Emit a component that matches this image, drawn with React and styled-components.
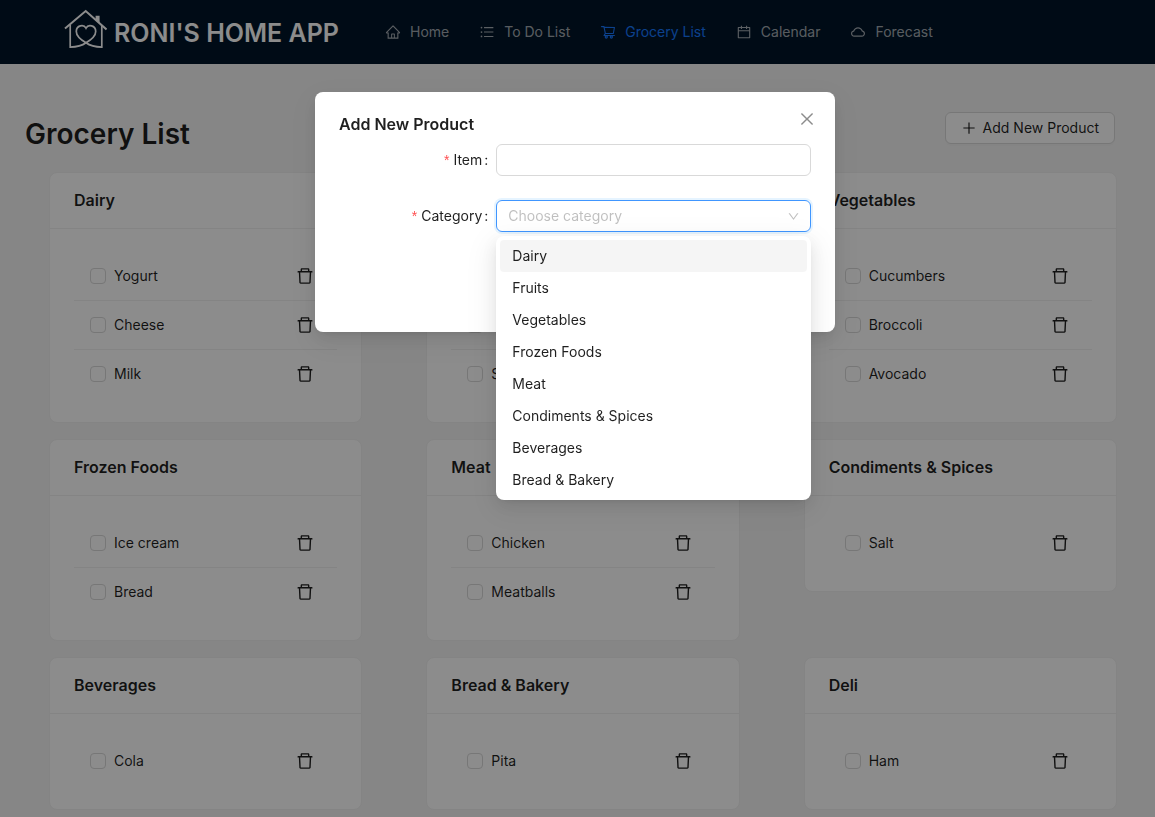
import React, { useState } from "react";
import styled, { createGlobalStyle } from "styled-components";
import {
  AiOutlineHome,
  AiOutlineUnorderedList,
  AiOutlineShoppingCart,
  AiOutlineCalendar,
  AiOutlineCloud,
  AiOutlineClose,
  AiOutlinePlus,
  AiOutlineDown,
  AiOutlineDelete,
} from "react-icons/ai";

const GlobalStyle = createGlobalStyle`
  *, *::before, *::after { box-sizing: border-box; }
  body {
    margin: 0;
    background: #f5f5f5;
    color: rgba(0, 0, 0, 0.88);
    font-family: Inter, Roboto, "Liberation Sans", sans-serif;
    font-size: 14px;
    line-height: 22px;
  }
  button, input, select { font: inherit; color: inherit; }
  ul { list-style: none; margin: 0; padding: 0; }
`;

const Page = styled.div`
  min-height: 100vh;
`;

const Header = styled.header`
  display: flex;
  align-items: center;
  height: 64px;
  padding-left: 64px;
  background: #001529;
`;

const Brand = styled.a`
  display: flex;
  align-items: center;
  gap: 7px;
  flex: 0 0 306px;
  padding-top: 2px;
  color: #fff;
  font-size: 25px;
  font-weight: 600;
  line-height: 40px;
  text-decoration: none;
  white-space: nowrap;
`;

const Nav = styled.nav`
  display: flex;
`;

const NavLink = styled.a`
  display: flex;
  align-items: center;
  gap: 9px;
  padding: 0 15px;
  line-height: 64px;
  color: ${(p) => (p.$active ? "#1677ff" : "rgba(255, 255, 255, 0.65)")};
  text-decoration: none;
  white-space: nowrap;
`;

const TitleBar = styled.div`
  display: flex;
  align-items: flex-start;
  justify-content: space-between;
  padding: 48px 40px 16px 25px;
`;

const PageTitle = styled.h1`
  margin: 0;
  font-size: 28px;
  font-weight: 600;
  line-height: 44px;
`;

const AddButton = styled.button`
  display: flex;
  align-items: center;
  gap: 6px;
  height: 32px;
  padding: 0 15px;
  border: 1px solid #d9d9d9;
  border-radius: 6px;
  background: #fff;
  box-shadow: 0 2px 0 rgba(0, 0, 0, 0.02);
`;

const CardGrid = styled.main`
  display: grid;
  grid-template-columns: repeat(3, 1fr);
  align-items: start;
  gap: 16px 64px;
  padding: 0 38px 0 49px;
`;

const Card = styled.section`
  border: 1px solid #f0f0f0;
  border-radius: 8px;
  background: #fff;
`;

const CardTitle = styled.h2`
  margin: 0;
  padding: 0 24px;
  border-bottom: 1px solid #f0f0f0;
  font-size: 16px;
  font-weight: 600;
  line-height: 55px;
`;

const CardList = styled.ul`
  padding: 23px 24px 24px;
`;

const ProductRow = styled.li`
  display: flex;
  align-items: center;
  justify-content: space-between;
  padding: 0 16px;
  height: 48px;

  & + & {
    height: 49px;
    border-top: 1px solid #f0f0f0;
  }
`;

const ProductLabel = styled.label`
  display: flex;
  align-items: center;
  gap: 8px;
`;

const Checkbox = styled.input`
  appearance: none;
  width: 16px;
  height: 16px;
  margin: 0;
  border: 1px solid #d9d9d9;
  border-radius: 4px;
  background: #fff;

  &:checked {
    border-color: #1677ff;
    background: #1677ff;
  }
`;

const DeleteButton = styled.button`
  display: flex;
  align-items: center;
  justify-content: center;
  width: 32px;
  height: 32px;
  padding: 0;
  border: 0;
  background: none;
`;

const Mask = styled.div`
  position: fixed;
  inset: 0;
  display: flex;
  align-items: flex-start;
  justify-content: center;
  padding: 92px 5px 0 0;
  background: rgba(0, 0, 0, 0.45);
`;

const popupShadow = `
  0 6px 16px 0 rgba(0, 0, 0, 0.08),
  0 3px 6px -4px rgba(0, 0, 0, 0.12),
  0 9px 28px 8px rgba(0, 0, 0, 0.05)
`;

const Dialog = styled.div`
  width: 520px;
  max-width: 100%;
  padding: 20px 24px;
  border-radius: 8px;
  background: #fff;
  box-shadow: ${popupShadow};
`;

const DialogHeader = styled.div`
  display: flex;
  justify-content: space-between;
  margin-bottom: 8px;
`;

const DialogTitle = styled.h2`
  margin: 0;
  font-size: 16px;
  font-weight: 600;
  line-height: 24px;
`;

const CloseButton = styled.button`
  display: flex;
  align-items: center;
  justify-content: center;
  width: 22px;
  height: 22px;
  margin: -4px -7px 0 0;
  padding: 0;
  border: 0;
  background: none;
  color: rgba(0, 0, 0, 0.45);
  align-self: flex-start;
`;

const Form = styled.form`
  display: grid;
  gap: 24px;
  padding-bottom: 80px;
`;

const Field = styled.div`
  display: grid;
  grid-template-columns: 1fr 2fr;
  align-items: center;
`;

const FieldLabel = styled.label`
  padding-right: 8px;
  text-align: right;

  &::before {
    content: "*";
    margin-right: 4px;
    color: #ff4d4f;
    font-family: "Liberation Sans", sans-serif;
  }

  &::after {
    content: ":";
    margin-left: 2px;
  }
`;

const TextInput = styled.input`
  width: 100%;
  height: 32px;
  padding: 0 11px;
  border: 1px solid #d9d9d9;
  border-radius: 6px;
  background: #fff;
  outline: none;
`;

const SelectBox = styled.div`
  position: relative;
  display: flex;
  align-items: center;
  height: 32px;
  padding: 0 10px 0 11px;
  border: 1px solid ${(p) => (p.$open ? "#4096ff" : "#d9d9d9")};
  border-radius: 6px;
  box-shadow: ${(p) => (p.$open ? "0 0 0 2px rgba(5, 145, 255, 0.1)" : "none")};
  color: rgba(0, 0, 0, 0.25);
`;

const Select = styled.select`
  appearance: none;
  flex: 1;
  min-width: 0;
  padding: 0;
  border: 0;
  outline: none;
  background: none;
  color: ${(p) => (p.$empty ? "rgba(0, 0, 0, 0.25)" : "rgba(0, 0, 0, 0.88)")};
`;

const Menu = styled.ul`
  position: absolute;
  top: 35px;
  left: -1px;
  right: -1px;
  padding: 4px;
  border-radius: 8px;
  background: #fff;
  box-shadow: ${popupShadow};
`;

const MenuItem = styled.li`
  padding: 5px 12px;
  border-radius: 4px;
  background: ${(p) => (p.$active ? "rgba(0, 0, 0, 0.04)" : "transparent")};
  color: rgba(0, 0, 0, 0.88);
`;

const navItems = [
  { label: "Home", Icon: AiOutlineHome },
  { label: "To Do List", Icon: AiOutlineUnorderedList },
  { label: "Grocery List", Icon: AiOutlineShoppingCart, active: true },
  { label: "Calendar", Icon: AiOutlineCalendar },
  { label: "Forecast", Icon: AiOutlineCloud },
];

const groups = [
  { title: "Dairy", items: ["Yogurt", "Cheese", "Milk"] },
  { title: "Fruits", items: ["Apples", "Bananas", "Strawberries"] },
  { title: "Vegetables", items: ["Cucumbers", "Broccoli", "Avocado"] },
  { title: "Frozen Foods", items: ["Ice cream", "Bread"] },
  { title: "Meat", items: ["Chicken", "Meatballs"] },
  { title: "Condiments & Spices", items: ["Salt"] },
  { title: "Beverages", items: ["Cola"] },
  { title: "Bread & Bakery", items: ["Pita"] },
  { title: "Deli", items: ["Ham"] },
];

const categories = groups.slice(0, 8).map((g) => g.title);

function Logo() {
  return (
    <svg width="43" height="50" viewBox="0 0 43 50" fill="none" stroke="currentColor" strokeWidth="2" aria-hidden="true">
      <path d="M1 20.5 21.7 3 42.5 21.5" />
      <path d="M31.6 7.8h4v8l-4-3.600z" fill="currentColor" stroke="none" />
      <path
        strokeWidth="1.7"
        d="M6.2 17v22.2C14 39 19 37 22 34.8 28.5 31 31.7 27.8 31.7 23.500c0-6.300-7.500-7.500-9.700-3.300-2.200-4.200-9.700-3-9.700 3.300 0 4.300 3.200 7.500 9.700 11.300C25 37 30 39 37.800 39.200V17"
      />
    </svg>
  );
}

function ProductCard({ title, items }) {
  return (
    <Card>
      <CardTitle>{title}</CardTitle>
      <CardList>
        {items.map((name) => (
          <ProductRow key={name}>
            <ProductLabel>
              <Checkbox type="checkbox" />
              {name}
            </ProductLabel>
            <DeleteButton type="button" aria-label={`Delete ${name}`}>
              <AiOutlineDelete size={20} />
            </DeleteButton>
          </ProductRow>
        ))}
      </CardList>
    </Card>
  );
}

function AddProductDialog({ onClose }) {
  const [category, setCategory] = useState("");
  const [open, setOpen] = useState(true);
  const choose = (name) => {
    setCategory(name);
    setOpen(false);
  };
  return (
    <Mask>
      <Dialog role="dialog" aria-modal="true" aria-labelledby="dialog-title">
        <DialogHeader>
          <DialogTitle id="dialog-title">Add New Product</DialogTitle>
          <CloseButton type="button" aria-label="Close" onClick={onClose}>
            <AiOutlineClose size={18} />
          </CloseButton>
        </DialogHeader>
        <Form>
          <Field>
            <FieldLabel htmlFor="item">Item</FieldLabel>
            <TextInput id="item" type="text" required />
          </Field>
          <Field>
            <FieldLabel htmlFor="category">Category</FieldLabel>
            <SelectBox $open={open}>
              <Select
                id="category"
                required
                $empty={!category}
                value={category}
                onChange={(e) => choose(e.target.value)}
              >
                <option value="" disabled>Choose category</option>
                {categories.map((name) => (
                  <option key={name}>{name}</option>
                ))}
              </Select>
              <AiOutlineDown size={13} />
              {open && (
                <Menu role="listbox" aria-label="Category">
                  {categories.map((name, i) => (
                    <MenuItem
                      key={name}
                      role="option"
                      aria-selected={name === category}
                      $active={i === 0}
                      onClick={() => choose(name)}
                    >
                      {name}
                    </MenuItem>
                  ))}
                </Menu>
              )}
            </SelectBox>
          </Field>
        </Form>
      </Dialog>
    </Mask>
  );
}

export default function App() {
  const [adding, setAdding] = useState(true);
  return (
    <Page>
      <GlobalStyle />
      <Header>
        <Brand href="#">
          <Logo />
          RONI'S HOME APP
        </Brand>
        <Nav>
          {navItems.map(({ label, Icon, active }) => (
            <NavLink key={label} href="#" $active={active}>
              <Icon size={16} />
              {label}
            </NavLink>
          ))}
        </Nav>
      </Header>
      <TitleBar>
        <PageTitle>Grocery List</PageTitle>
        <AddButton type="button" onClick={() => setAdding(true)}>
          <AiOutlinePlus size={16} />
          Add New Product
        </AddButton>
      </TitleBar>
      <CardGrid>
        {groups.map((group) => (
          <ProductCard key={group.title} {...group} />
        ))}
      </CardGrid>
      {adding && <AddProductDialog onClose={() => setAdding(false)} />}
    </Page>
  );
}
